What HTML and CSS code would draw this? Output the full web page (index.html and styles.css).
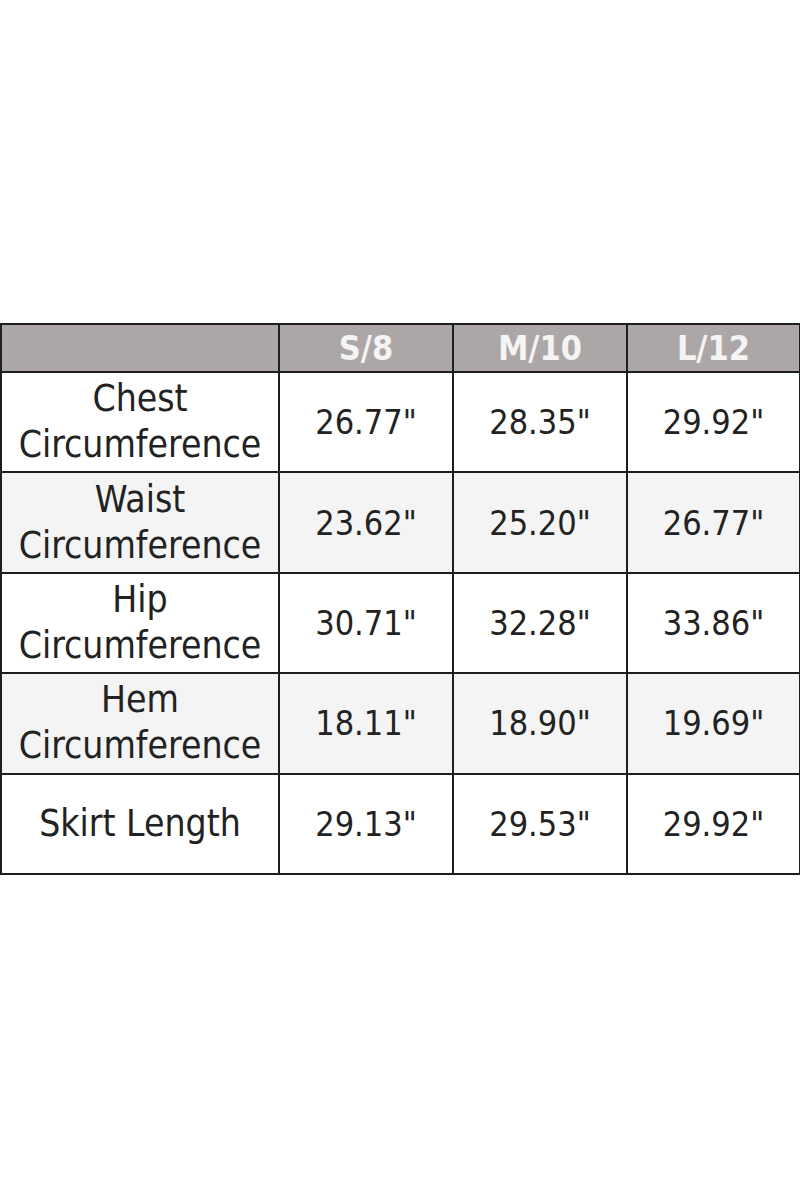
FILE: index.html
```html
<!DOCTYPE html>
<html>
<head>
<meta charset="utf-8">
<link rel="stylesheet" href="styles.css">
</head>
<body>
<div class="page">
  <table class="sizes">
    <colgroup>
      <col class="c-label"><col class="c-size"><col class="c-size"><col class="c-last">
    </colgroup>
    <thead>
      <tr><th></th><th>S/8</th><th>M/10</th><th>L/12</th></tr>
    </thead>
    <tbody>
      <tr><td class="label">Chest<br>Circumference</td><td>26.77"</td><td>28.35"</td><td>29.92"</td></tr>
      <tr class="alt"><td class="label">Waist<br>Circumference</td><td>23.62"</td><td>25.20"</td><td>26.77"</td></tr>
      <tr><td class="label">Hip<br>Circumference</td><td>30.71"</td><td>32.28"</td><td>33.86"</td></tr>
      <tr class="alt"><td class="label">Hem<br>Circumference</td><td>18.11"</td><td>18.90"</td><td>19.69"</td></tr>
      <tr><td class="label">Skirt Length</td><td>29.13"</td><td>29.53"</td><td>29.92"</td></tr>
    </tbody>
  </table>
</div>
</body>
</html>
```
FILE: styles.css
```css
html, body {
  margin: 0;
  padding: 0;
  background: #ffffff;
}
.page {
  width: 800px;
  height: 1200px;
  padding-top: 323px;
  box-sizing: border-box;
}
.sizes {
  width: 799px;
  border-collapse: collapse;
  table-layout: fixed;
  font-family: "DejaVu Sans Condensed", "Liberation Sans Narrow", "DejaVu Sans", sans-serif;
  color: #222;
}
.c-label { width: 278px; }
.c-size { width: 174px; }
.c-last { width: 173px; }
.sizes th, .sizes td {
  border: 2px solid #1e1e1e;
  text-align: center;
  vertical-align: middle;
  padding: 0;
}
.sizes th {
  background: #aca7a6;
  color: #f4f4f4;
  font-size: 34px;
  font-weight: bold;
  height: 46px;
  line-height: 46px;
}
.sizes td {
  font-size: 34px;
  line-height: 46px;
  height: 98.4px;
}
.sizes td.label {
  font-size: 37px;
}
.sizes tr.alt td {
  background: #f4f4f4;
}
```
